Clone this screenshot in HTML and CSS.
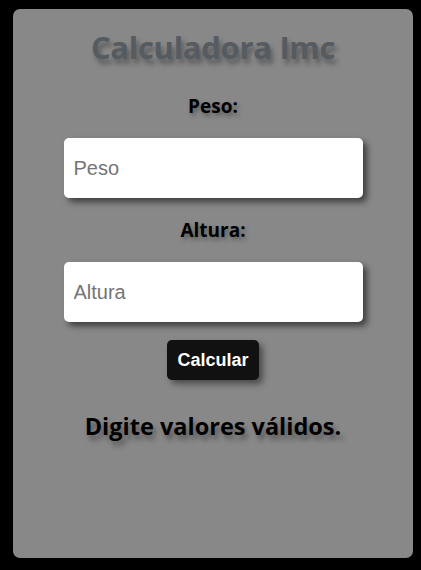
FILE: index.html
```html
<!DOCTYPE html>
<html lang="pt">
<head>
<meta charset="utf-8">
<title>Calculadora Imc</title>
<link rel="stylesheet" href="styles.css">
</head>
<body>
<main class="card">
  <h1 class="title">Calculadora Imc</h1>
  <label class="label label-first" for="peso">Peso:</label>
  <input class="field field-first" id="peso" type="text" placeholder="Peso">
  <label class="label label-second" for="altura">Altura:</label>
  <input class="field field-second" id="altura" type="text" placeholder="Altura">
  <button class="btn" type="button">Calcular</button>
  <p class="result">Digite valores válidos.</p>
</main>
</body>
</html>
```
FILE: styles.css
```css
html, body {
  margin: 0;
  padding: 0;
  background: #000;
}
body {
  padding: 9px 8px 12px 13px;
  font-family: "Open Sans", "Noto Sans", sans-serif;
}
.card {
  box-sizing: border-box;
  width: 400px;
  height: 549px;
  background: #888888;
  border-radius: 7px;
  display: flex;
  flex-direction: column;
  align-items: center;
}
.title {
  margin: 19px 0 0;
  font-size: 31px;
  line-height: 38px;
  font-weight: 700;
  color: #555b61;
  letter-spacing: -0.3px;
  text-shadow: 3px 5px 5px rgba(0,0,0,0.35);
}
.label {
  font-size: 19px;
  line-height: 26px;
  font-weight: 700;
  color: #000;
  text-shadow: 2px 3px 4px rgba(0,0,0,0.35);
}
.label-first {
  margin-top: 27px;
}
.label-second {
  margin-top: 19px;
}
.field {
  box-sizing: border-box;
  width: 299px;
  height: 60px;
  border: none;
  border-radius: 5px;
  background: #fff;
  padding: 0 10px;
  font-family: "Liberation Sans", Arial, sans-serif;
  font-size: 20px;
  color: #333;
  box-shadow: 4px 4px 6px rgba(0,0,0,0.55);
  outline: none;
}
.field-first {
  margin-top: 19px;
}
.field-second {
  margin-top: 19px;
}
.field::placeholder {
  color: #757575;
}
.btn {
  margin-top: 18px;
  width: 92px;
  height: 40px;
  border: none;
  border-radius: 5px;
  background: #111;
  color: #fff;
  font-family: "Liberation Sans", Arial, sans-serif;
  font-weight: 700;
  font-size: 18px;
  box-shadow: 4px 4px 6px rgba(0,0,0,0.45);
  padding: 0;
}
.result {
  margin: 31px 0 0;
  font-size: 23.5px;
  line-height: 30px;
  font-weight: 700;
  color: #000;
  text-shadow: 3px 5px 5px rgba(0,0,0,0.35);
}
```
